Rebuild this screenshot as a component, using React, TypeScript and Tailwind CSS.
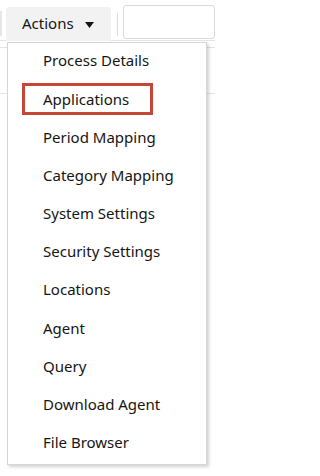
import React from "react";

const items = [
  "Process Details",
  "Applications",
  "Period Mapping",
  "Category Mapping",
  "System Settings",
  "Security Settings",
  "Locations",
  "Agent",
  "Query",
  "Download Agent",
  "File Browser",
];

export default function App() {
  return (
    <div
      className="relative w-[215px] h-[476px] overflow-hidden bg-white text-[#161513]"
      style={{ fontFamily: '"Noto Sans", "Open Sans", sans-serif' }}
    >
      {/* top toolbar */}
      <div className="flex h-[41px] items-start border-b border-[#e4e4e4]">
        <div className="mt-[11px] h-[25px] w-[2px] bg-[#e6e6e6]" />
        <div className="ml-[4px] mt-[7px] flex h-[34px] w-[105px] items-center gap-[11px] rounded-t-[3px] bg-[#f2f2f2] pb-[2px] pl-[16px]">
          <span className="text-[15px] leading-none">Actions</span>
          <svg width="9" height="6" viewBox="0 0 9 6" className="mt-[3px]">
            <path d="M0 0H9L4.5 6Z" fill="#161513" />
          </svg>
        </div>
        <div className="ml-[6px] mt-[13px] h-[23px] w-[1px] bg-[#dcdcdc]" />
        <div className="ml-[5px] mt-[5px] h-[34px] flex-1 rounded-[3px] border border-[#d9d9d9] bg-white" />
      </div>
      <div className="mt-[6px] h-[1px] bg-[#e4e4e4]" />
      <div className="mt-[45px] h-[1px] bg-[#e4e4e4]" />

      {/* dropdown menu */}
      <div className="absolute left-[7px] top-[42px] flex w-[200px] flex-col border border-[#d6d6d6] bg-white pb-[1px] shadow-[2px_2px_3px_rgba(0,0,0,0.18)]">
        {items.map((label) => (
          <div
            key={label}
            className="relative flex h-[38.2px] items-center pb-[3px] pl-[35px] text-[15px]"
          >
            {label === "Applications" && (
              <div className="absolute left-[14px] top-[2px] h-[32px] w-[131px] border-[3px] border-[#c74634]" />
            )}
            <span className="relative">{label}</span>
          </div>
        ))}
      </div>
    </div>
  );
}
